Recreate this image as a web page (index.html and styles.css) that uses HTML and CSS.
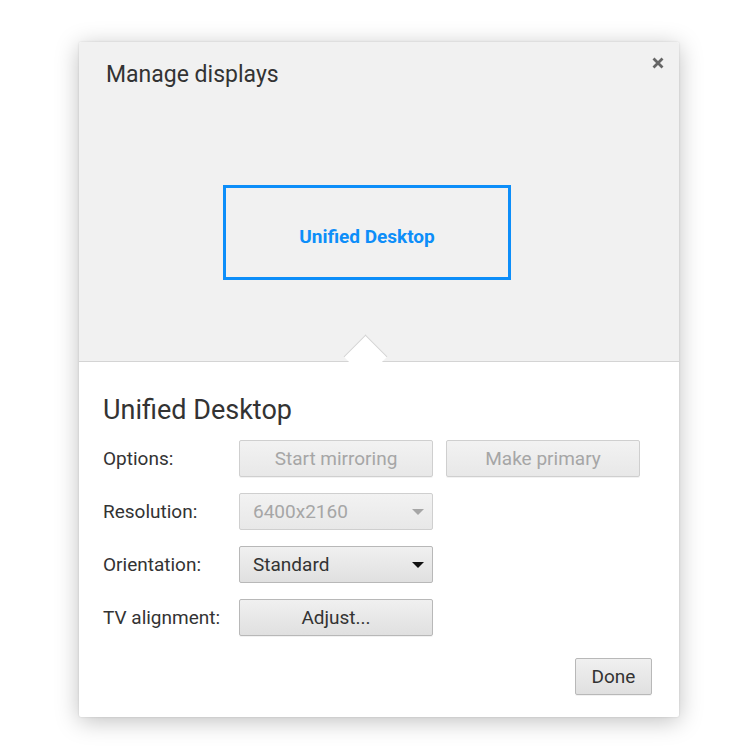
FILE: index.html
```html
<!DOCTYPE html>
<html lang="en">
<head>
    <meta charset="UTF-8">
    <meta name="viewport" content="width=device-width, initial-scale=1.0">
    <title>Manage displays</title>
    <link rel="stylesheet" href="styles.css">
</head>
<body>
    <div class="dialog">
        <div class="layout-area">
            <div class="dialog-title">Manage displays</div>
            <button class="close-btn" aria-label="Close">
                <svg width="12" height="12" viewBox="0 0 12 12">
                    <path d="M1.5 1.5 L10.5 10.5 M10.5 1.5 L1.5 10.5" stroke="#666" stroke-width="2.8"/>
                </svg>
            </button>
            <div class="display-box">Unified Desktop</div>
            <div class="notch"></div>
        </div>

        <div class="details">
            <h2 class="display-name">Unified Desktop</h2>

            <div class="row">
                <div class="label">Options:</div>
                <div class="controls">
                    <button class="btn" disabled>Start mirroring</button>
                    <button class="btn" disabled>Make primary</button>
                </div>
            </div>

            <div class="row">
                <div class="label">Resolution:</div>
                <div class="controls">
                    <div class="select disabled">
                        <span>6400x2160</span>
                        <span class="caret"></span>
                    </div>
                </div>
            </div>

            <div class="row">
                <div class="label">Orientation:</div>
                <div class="controls">
                    <div class="select">
                        <span>Standard</span>
                        <span class="caret"></span>
                    </div>
                </div>
            </div>

            <div class="row">
                <div class="label">TV alignment:</div>
                <div class="controls">
                    <button class="btn">Adjust...</button>
                </div>
            </div>

            <div class="footer">
                <button class="btn done-btn">Done</button>
            </div>
        </div>
    </div>
</body>
</html>
```

FILE: styles.css
```css
* {
    margin: 0;
    padding: 0;
    box-sizing: border-box;
}

body {
    font-family: Roboto, 'Noto Sans', sans-serif;
    background-color: #ffffff;
    width: 756px;
    height: 756px;
    overflow: hidden;
    padding-top: 42px;
    padding-left: 79px;
}

.dialog {
    width: 600px;
    height: 675px;
    background: #fff;
    border-radius: 2px;
    box-shadow: 0 4px 23px rgba(0, 0, 0, 0.25), 0 0 2px rgba(0, 0, 0, 0.15);
    overflow: hidden;
}

.layout-area {
    position: relative;
    height: 320px;
    background-color: #f1f1f1;
    border-bottom: 1px solid #d4d4d4;
    padding-top: 20px;
    padding-left: 27px;
}

.dialog-title {
    font-size: 23px;
    color: #333;
    line-height: 26px;
}

.close-btn {
    position: absolute;
    top: 14px;
    right: 14px;
    width: 14px;
    height: 14px;
    border: none;
    background: none;
    display: flex;
    align-items: center;
    justify-content: center;
}

.display-box {
    width: 288px;
    height: 95px;
    margin-top: 97px;
    margin-left: 117px;
    padding-top: 8px;
    border: 3px solid #0d8ef9;
    display: flex;
    align-items: center;
    justify-content: center;
    color: #0d8ef9;
    font-weight: bold;
    font-size: 19px;
}

.notch {
    position: absolute;
    left: 271px;
    bottom: -11px;
    width: 31px;
    height: 31px;
    background: #fff;
    border-left: 1px solid #d4d4d4;
    border-top: 1px solid #d4d4d4;
    transform: rotate(45deg);
}

.details {
    position: relative;
    padding: 32px 24px 0 24px;
}

.display-name {
    font-size: 27px;
    font-weight: normal;
    color: #333;
    line-height: 32px;
    margin-bottom: 14px;
}

.row {
    display: flex;
    align-items: center;
    height: 37px;
    margin-bottom: 16px;
}

.label {
    width: 136px;
    font-size: 19px;
    color: #333;
}

.controls {
    display: flex;
    gap: 13px;
}

.btn {
    width: 194px;
    height: 37px;
    font-family: Roboto, 'Noto Sans', sans-serif;
    font-size: 19px;
    color: #333;
    background: linear-gradient(#f0f0f0, #e0e0e0);
    border: 1px solid #b8b8b8;
    border-radius: 2px;
    box-shadow: 0 1px 0 rgba(0, 0, 0, 0.05);
}

.btn:disabled {
    color: #a6a6a6;
    background: linear-gradient(#f2f2f2, #e8e8e8);
    border-color: #cfcfcf;
}

.select {
    width: 194px;
    height: 37px;
    display: flex;
    align-items: center;
    justify-content: space-between;
    padding: 0 8px 0 13px;
    font-size: 19px;
    color: #333;
    background: linear-gradient(#f0f0f0, #e0e0e0);
    border: 1px solid #b8b8b8;
    border-radius: 2px;
}

.caret {
    width: 0;
    height: 0;
    border-left: 6px solid transparent;
    border-right: 6px solid transparent;
    border-top: 6px solid #111;
}

.select.disabled {
    color: #a6a6a6;
    background: linear-gradient(#f2f2f2, #e8e8e8);
    border-color: #cfcfcf;
}

.select.disabled .caret {
    border-top-color: #a6a6a6;
}

.footer {
    display: flex;
    justify-content: flex-end;
    padding-right: 3px;
    margin-top: 22px;
}

.done-btn {
    width: 77px;
}
```
